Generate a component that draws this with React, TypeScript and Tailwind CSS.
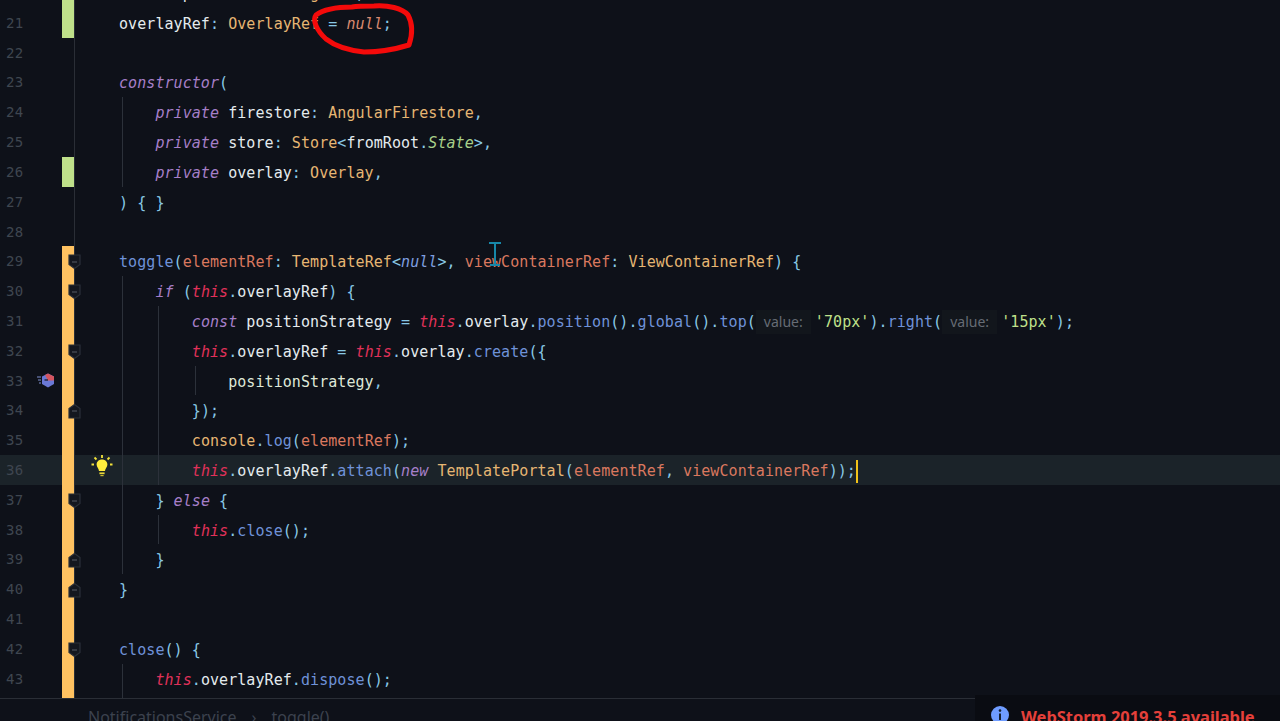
const plain = "text-[#e4ebee]";
const punct = "text-[#89c9e6]";
const type = "text-[#e6b673]";
const param = "text-[#d9785f]";
const method = "text-[#6f92d8]";
const self = "italic text-[#e0315a]";
const keyword = "italic text-[#a67fc8]";
const nul = "italic text-[#d98a70]";
const str = "text-[#bfe08a]";
const state = "italic text-[#a8d08a]";

type Token = [string, string];

type Line = {
  n: number;
  bar?: "green" | "orange";
  fold?: "down" | "up";
  indent?: number;
  tokens?: (Token | { hint: string })[];
};

const lines: Line[] = [
  { n: 20, bar: "green", tokens: [["isMenuOpen", plain], [": ", punct], ["ConnectingPort", type], [",", punct]] },
  {
    n: 21,
    bar: "green",
    tokens: [["overlayRef", plain], [": ", punct], ["OverlayRef", type], [" = ", punct], ["null", nul], [";", punct]],
  },
  { n: 22 },
  { n: 23, tokens: [["constructor", keyword], ["(", punct]] },
  {
    n: 24,
    indent: 1,
    tokens: [["private", keyword], [" firestore", plain], [": ", punct], ["AngularFirestore", type], [",", punct]],
  },
  {
    n: 25,
    indent: 1,
    tokens: [
      ["private", keyword],
      [" store", plain],
      [": ", punct],
      ["Store", type],
      ["<", punct],
      ["fromRoot", plain],
      [".", punct],
      ["State", state],
      [">,", punct],
    ],
  },
  {
    n: 26,
    bar: "green",
    indent: 1,
    tokens: [["private", keyword], [" overlay", plain], [": ", punct], ["Overlay", type], [",", punct]],
  },
  { n: 27, tokens: [[") { }", punct]] },
  { n: 28 },
  {
    n: 29,
    bar: "orange",
    fold: "down",
    tokens: [
      ["toggle", method],
      ["(", punct],
      ["elementRef", param],
      [": ", punct],
      ["TemplateRef", type],
      ["<", punct],
      ["null", "italic text-[#7f9fe0]"],
      [">, ", punct],
      ["viewContainerRef", param],
      [": ", punct],
      ["ViewContainerRef", type],
      [") {", punct],
    ],
  },
  {
    n: 30,
    bar: "orange",
    fold: "down",
    indent: 1,
    tokens: [["if", keyword], [" (", punct], ["this", self], [".", punct], ["overlayRef", plain], [") {", punct]],
  },
  {
    n: 31,
    bar: "orange",
    indent: 2,
    tokens: [
      ["const", keyword],
      [" positionStrategy ", plain],
      ["= ", punct],
      ["this", self],
      [".", punct],
      ["overlay", plain],
      [".", punct],
      ["position", method],
      ["().", punct],
      ["global", method],
      ["().", punct],
      ["top", method],
      ["(", punct],
      { hint: "value:" },
      ["'70px'", str],
      [").", punct],
      ["right", method],
      ["(", punct],
      { hint: "value:" },
      ["'15px'", str],
      [");", punct],
    ],
  },
  {
    n: 32,
    bar: "orange",
    fold: "down",
    indent: 2,
    tokens: [
      ["this", self],
      [".", punct],
      ["overlayRef", plain],
      [" = ", punct],
      ["this", self],
      [".", punct],
      ["overlay", plain],
      [".", punct],
      ["create", method],
      ["({", punct],
    ],
  },
  { n: 33, bar: "orange", indent: 3, tokens: [["positionStrategy", "text-[#dfe8d8]"], [",", punct]] },
  { n: 34, bar: "orange", fold: "up", indent: 2, tokens: [["});", punct]] },
  {
    n: 35,
    bar: "orange",
    indent: 2,
    tokens: [["console", type], [".", punct], ["log", method], ["(", punct], ["elementRef", param], [");", punct]],
  },
  {
    n: 36,
    bar: "orange",
    indent: 2,
    tokens: [
      ["this", self],
      [".", punct],
      ["overlayRef", plain],
      [".", punct],
      ["attach", method],
      ["(", punct],
      ["new", keyword],
      [" ", plain],
      ["TemplatePortal", type],
      ["(", punct],
      ["elementRef", param],
      [", ", punct],
      ["viewContainerRef", param],
      ["));", punct],
    ],
  },
  { n: 37, bar: "orange", fold: "down", indent: 1, tokens: [["} ", punct], ["else", keyword], [" {", punct]] },
  {
    n: 38,
    bar: "orange",
    indent: 2,
    tokens: [["this", self], [".", punct], ["close", method], ["();", punct]],
  },
  { n: 39, bar: "orange", fold: "up", indent: 1, tokens: [["}", punct]] },
  { n: 40, bar: "orange", fold: "up", tokens: [["}", punct]] },
  { n: 41, bar: "orange" },
  { n: 42, bar: "orange", fold: "down", tokens: [["close", method], ["() {", punct]] },
  {
    n: 43,
    bar: "orange",
    indent: 1,
    tokens: [["this", self], [".", punct], ["overlayRef", plain], [".", punct], ["dispose", method], ["();", punct]],
  },
  { n: 44, bar: "orange", indent: 1 },
];

function FoldMark({ dir }: { dir: "down" | "up" }) {
  return (
    <svg width="13" height="16" viewBox="0 0 13 16" className="absolute left-[68px] top-[8px]">
      <path
        d={dir === "down" ? "M1 1H12V10.5L6.5 14.5L1 10.5Z" : "M1 15H12V5.5L6.5 1.5L1 5.5Z"}
        fill="#14171f"
        stroke="#2b3039"
        strokeWidth="1.2"
      />
      <path d="M4 8H9" stroke="#565c66" strokeWidth="1" />
    </svg>
  );
}

function Bulb() {
  return (
    <svg width="22" height="24" viewBox="0 0 22 24" className="absolute left-[91px] top-[-1px]">
      <path
        d="M11 1V4M3.5 3.5L5.5 5.5M18.5 3.5L16.5 5.5M0.5 10.5H3M19 10.5H21.5"
        stroke="#f3e23a"
        strokeWidth="1.8"
      />
      <path d="M11 5.5C7.8 5.5 5.6 7.8 5.6 10.6C5.6 13.4 7.8 14.5 8 17H14C14.2 14.5 16.4 13.4 16.4 10.6C16.4 7.8 14.2 5.5 11 5.5Z" fill="#ffec3d" />
      <path d="M8.4 18.4H13.6V20.2H8.4Z" fill="#e8d838" />
      <path d="M9.4 21H12.6V22.2H9.4Z" fill="#c8b930" />
    </svg>
  );
}

function ServiceIcon() {
  return (
    <svg width="18" height="15" viewBox="0 0 18 15" className="absolute left-[37px] top-[7px]">
      <path d="M0 4H4M1 7H4M2 10H4" stroke="#7f8fd0" strokeWidth="1.2" />
      <path d="M11 0.5L17 3.6V11L11 14.5L5 11V3.6Z" fill="#6a78d6" />
      <path d="M11 0.5L17 3.6V7.5H11L8 2Z" fill="#d4555f" />
      <path d="M7.5 7H11" stroke="#12151c" strokeWidth="1.2" />
    </svg>
  );
}

function CodeLine({ line }: { line: Line }) {
  const active = line.n === 36;
  const barColor = line.bar === "green" ? "bg-[#bfe08a]" : line.bar === "orange" ? "bg-[#ffc261]" : "";
  const guides = Array.from({ length: line.indent ?? 0 });

  return (
    <div className={`relative flex h-[29.82px] shrink-0 items-stretch ${active ? "bg-[#1b2329]" : ""}`}>
      <div className="w-[62px] pl-[6px] pt-px text-[14px] leading-[29.82px] tracking-[0.4px] text-[#3f4650]">{line.n}</div>
      <div className={`w-[12px] ${barColor}`} />
      <div className="w-[45px] border-l border-[#2a2e36]" />
      {guides.map((_, i) => (
        <span key={i} className="ml-[3px] w-[33.4px] border-l border-[#2c313a]" />
      ))}
      <div className="whitespace-pre pt-[2px] leading-[29.82px]">
        {line.tokens?.map((t, i) =>
          "hint" in t ? (
            <span
              key={i}
              className="mr-1 inline-block h-[24px] w-[55px] bg-[#12161c] pl-2 align-middle font-['Noto_Sans',sans-serif] text-[14px] leading-[23px] tracking-normal text-[#666c75]"
            >
              {t.hint}
            </span>
          ) : (
            <span key={i} className={t[1]}>
              {t[0]}
            </span>
          ),
        )}
        {active && <span className="inline-block h-[23px] w-[2px] bg-[#f2c318] align-middle" />}
      </div>
      {line.fold && <FoldMark dir={line.fold} />}
      {active && <Bulb />}
      {line.n === 33 && <ServiceIcon />}
    </div>
  );
}

export default function App() {
  return (
    <div className="relative flex h-[721px] w-[1280px] flex-col overflow-hidden bg-[#0e1119] font-['DejaVu_Sans_Mono',monospace] text-[15px] tracking-[0.065px]">
      <main className="h-[698px] overflow-hidden">
        <div className="-mt-[22px] flex flex-col">
          {lines.map((line) => (
            <CodeLine key={line.n} line={line} />
          ))}
        </div>
      </main>

      <footer className="flex h-[23px] items-start gap-[15px] overflow-hidden border-t border-[#2a2e36] pl-[88px] font-['Noto_Sans',sans-serif] text-[16px] leading-[36px] tracking-normal text-[#3c424e]">
        <span>NotificationsService</span>
        <span>›</span>
        <span>toggle()</span>
      </footer>

      {/* update toast, cut off by the bottom of the window */}
      <div className="absolute bottom-0 right-0 flex h-[26px] w-[305px] items-start gap-[12px] overflow-hidden bg-[#0a0c12] pl-[16px] pt-[11px] font-['Noto_Sans',sans-serif] tracking-normal">
        <svg width="18" height="18" viewBox="0 0 18 18" className="shrink-0">
          <circle cx="9" cy="9" r="9" fill="#6f9cff" />
          <circle cx="9" cy="4.6" r="1.3" fill="#16202f" />
          <path d="M9 7.5V14" stroke="#16202f" strokeWidth="2" />
        </svg>
        <span className="pt-px text-[16.45px] font-bold leading-[20px] text-[#e5403a]">WebStorm 2019.3.5 available</span>
      </div>

      {/* red marker scribble around the null */}
      <svg width="130" height="60" viewBox="300 0 130 60" className="absolute left-[300px] top-0" fill="none">
        <path
          d="M352 7C340 7 324 9 316 15C312 20 317 31 326 39C335 46 345 50 364 52C380 52 396 49 409 45C412 36 414 26 408 15C402 8 388 5 374 6C364 6 358 6 352 7Z"
          stroke="#f40a0a"
          strokeWidth="5"
          strokeLinejoin="round"
        />
      </svg>

      {/* mouse I-beam */}
      <svg width="16" height="26" viewBox="0 0 16 26" className="absolute left-[487px] top-[241px]" fill="none">
        <path d="M2 2H14M8 2V23M3 24H13" stroke="#1787a8" strokeWidth="2" />
      </svg>
    </div>
  );
}
